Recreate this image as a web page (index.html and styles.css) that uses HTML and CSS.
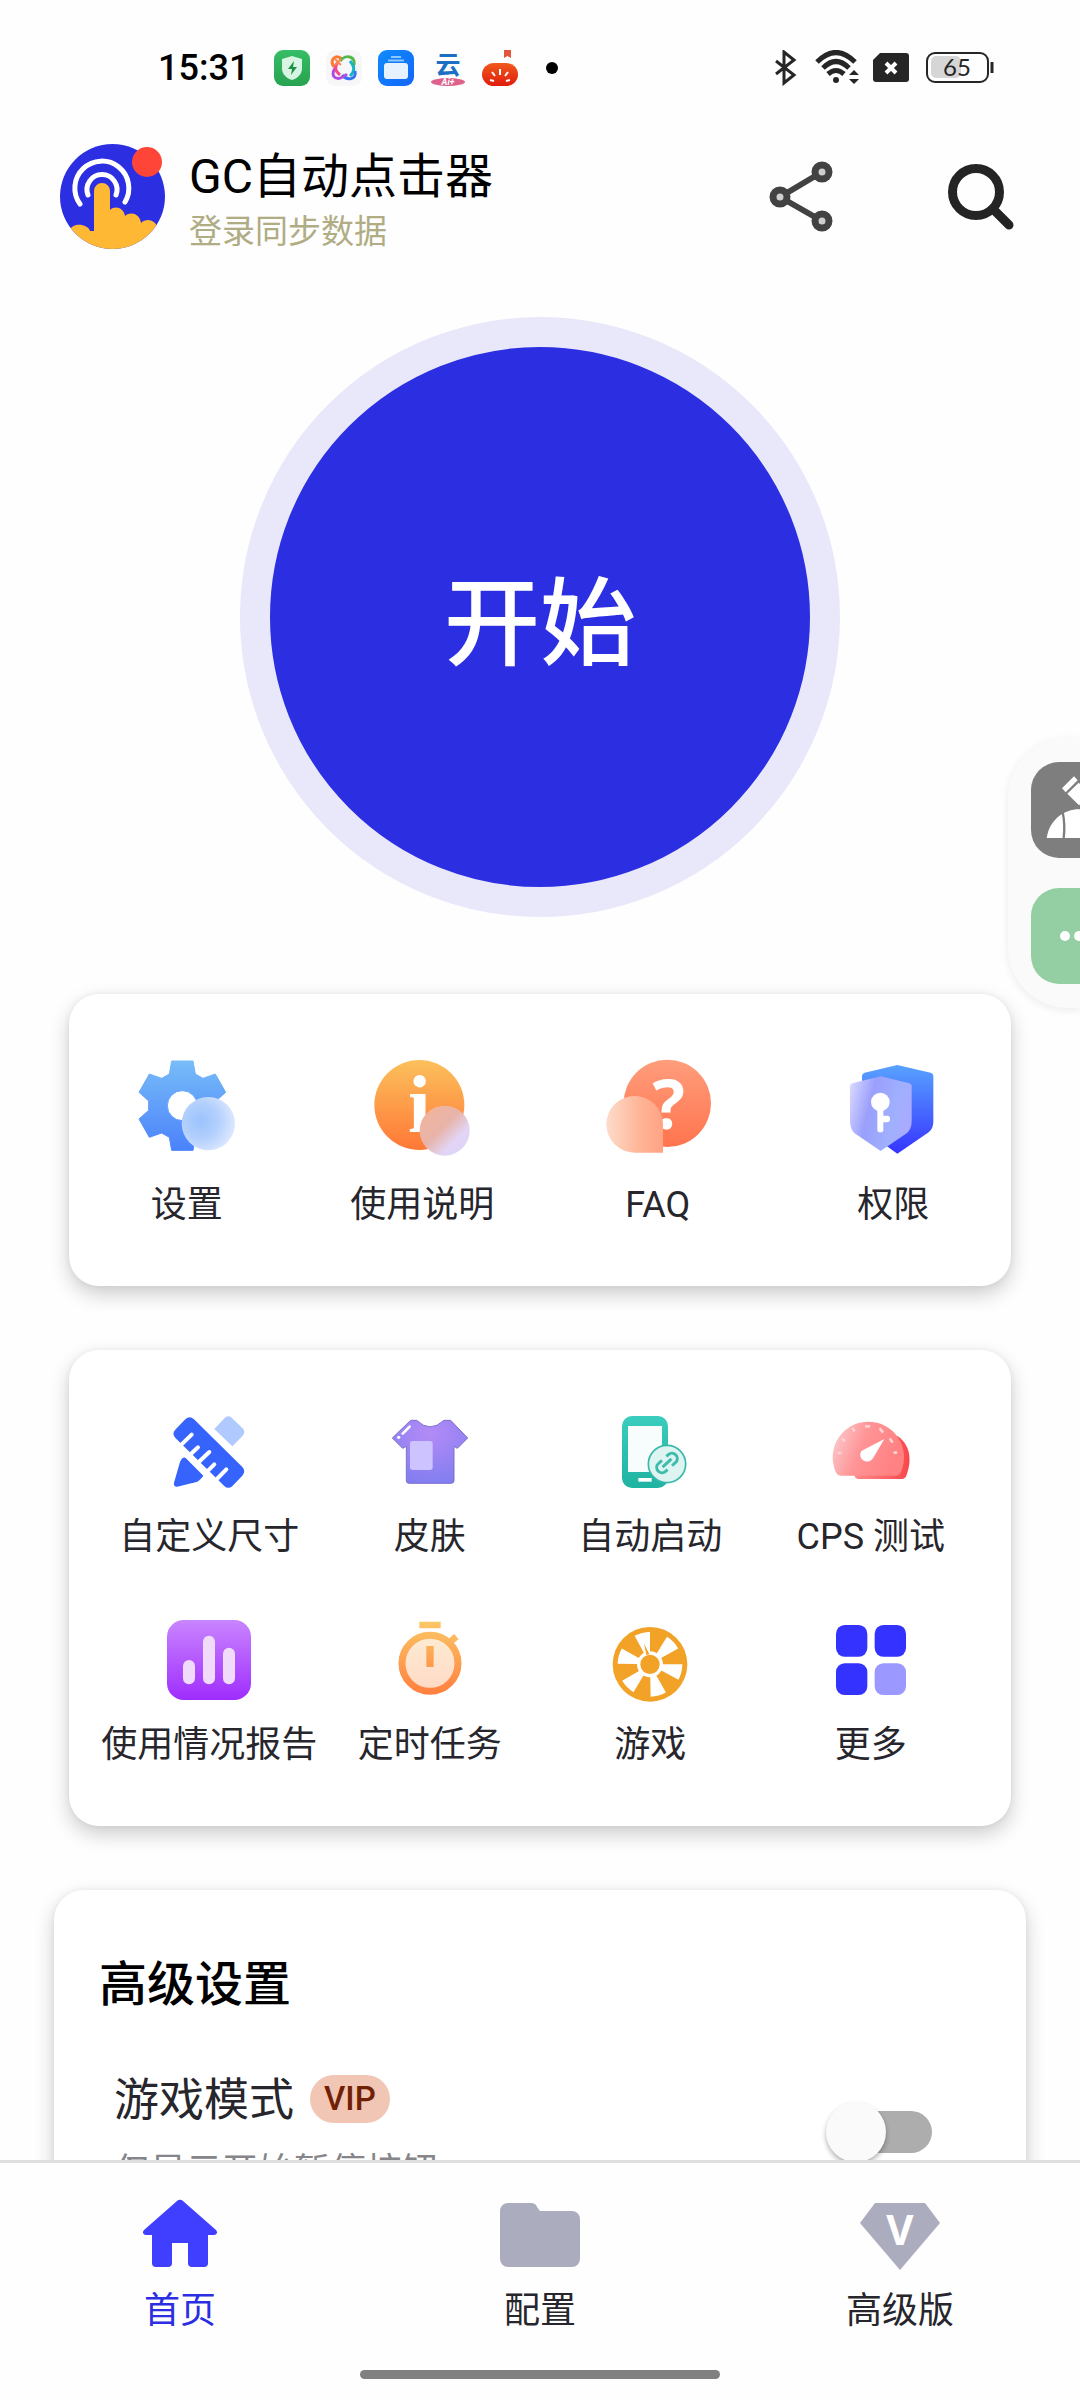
FILE: index.html
```html
<!DOCTYPE html>
<html lang="zh-CN">
<head>
<meta charset="utf-8">
<meta name="viewport" content="width=device-width, initial-scale=1">
<title>GC自动点击器</title>
<link rel="stylesheet" href="styles.css">
</head>
<body>
<div class="status">
  <time class="clock">15:31</time>
  <div class="notices">
    <svg width="36" height="36" viewBox="0 0 36 36"><defs><linearGradient id="ng" x2="0" y2="1"><stop stop-color="#36bd66"/><stop offset="1" stop-color="#27a350"/></linearGradient></defs><rect width="36" height="36" rx="9" fill="url(#ng)"/><path d="M18 6l10 3v9c0 6-4 10-10 12C12 28 8 24 8 18V9z" fill="#d8f5e3"/><path d="M20 11l-6 8h4l-1 6 6-8h-4z" fill="#1f9048"/></svg>
    <svg width="36" height="36" viewBox="0 0 36 36"><rect width="36" height="36" rx="9" fill="#f7f7f9"/><g fill="none" stroke-width="3"><path d="M8 17C3 9 10 4 16 9" stroke="#ff7a30"/><path d="M14 11C20 3 32 7 27 17" stroke="#55b84c"/><path d="M24 11c5 6 5 10 0 15" stroke="#18b5c4"/><path d="M29 21c2 9-8 10-13 4" stroke="#3576f0"/><path d="M21 24C12 32 3 28 9 18" stroke="#b44be0"/><path d="M12 12c-4 5-3 9 2 13" stroke="#f04d8a"/></g><path d="M9 9l6 6m0-6l-6 6" stroke="#ff8850" stroke-width="2"/></svg>
    <svg width="36" height="36" viewBox="0 0 36 36"><defs><linearGradient id="nb" x2="1" y2="1"><stop stop-color="#0f8cfb"/><stop offset="1" stop-color="#1365fb"/></linearGradient></defs><rect width="36" height="36" rx="9" fill="url(#nb)"/><path d="M13 7h10M10 10.500h16" stroke="#8cc8ff" stroke-width="2"/><rect x="6" y="13" width="24" height="16" rx="3" fill="#e6f3ff"/></svg>
    <svg width="36" height="36" viewBox="0 0 36 36"><text x="18" y="24" text-anchor="middle" font-size="25" font-weight="700" fill="#1c70c4">云</text><ellipse cx="18" cy="32" rx="17" ry="4" fill="#dd628c"/><text x="18" y="35" text-anchor="middle" font-size="9" font-weight="700" font-style="italic" fill="#fff">Ai+</text></svg>
    <svg width="36" height="36" viewBox="0 0 36 36"><defs><linearGradient id="no" x2="0" y2="1"><stop stop-color="#f05a1c"/><stop offset="1" stop-color="#e01c0c"/></linearGradient></defs><path d="M22 0h7v8l-3.500-2L22 8z" fill="#e2563e"/><rect y="13" width="36" height="23" rx="12" fill="url(#no)"/><path d="M18 19v6M10 22l3 4M26 22l-3 4M8 30l4 1M28 30l-4 1" stroke="#fff" stroke-width="2"/></svg>
  </div>
  <span class="more-notices"></span>
  <svg class="signals" width="220" height="36" viewBox="774 51 220 36">
    <g fill="none" stroke="#262626" stroke-width="3"><path d="M776 62l18 14-10 8V53l10 8-18 14"/><path d="M817 63Q836 44 855 63" stroke-width="5"/><path d="M823 69Q836 56 849 69" stroke-width="5"/><path d="M828 75Q836 68 844 75" stroke-width="5"/></g>
    <circle cx="836" cy="81" r="3" fill="#262626"/><path d="M849 76l5-5 5 5zM849 80l5 5 5-5z" fill="#262626"/>
    <path d="M880 54h26a3 3 0 0 1 3 3v23a3 3 0 0 1-3 3h-30a3 3 0 0 1-3-3V61z" fill="#262626"/><path d="M886 64l10 10m0-10l-10 10" stroke="#fff" stroke-width="4"/>
    <rect x="931" y="57" width="30" height="22" rx="5" fill="#d6d6d6"/><rect x="927" y="54" width="61" height="29" rx="8" fill="none" stroke="#262626" stroke-width="2"/><path d="M992 63v11" stroke="#262626" stroke-width="3"/>
    <text class="charge" x="957" y="77" text-anchor="middle">65</text>
  </svg>
</div>

<header class="header">
  <button class="avatar" aria-label="账号">
    <svg width="105" height="105" viewBox="0 0 105 105"><defs><clipPath id="av"><circle cx="52.500" cy="52.500" r="52.500"/></clipPath></defs>
    <g clip-path="url(#av)"><rect width="105" height="105" fill="#2c2ee2"/>
    <g fill="none" stroke="#fff" stroke-width="5" stroke-linecap="round"><path d="M20 60A27 27 0 1 1 65 58"/><path d="M28 51A15 15 0 1 1 56 51"/></g>
    <path d="M34 47a8 8 0 0 1 16 0v19c5-5 14-2 15 6 6-5 15-2 16 7 6-6 15-2 16 4v24H10V86c3-8 18-6 20 1h4z" fill="#ffb833"/></g></svg>
    <span class="dot"></span>
  </button>
  <div class="account"><h1>GC自动点击器</h1><a href="#login">登录同步数据</a></div>
  <button class="tool" aria-label="分享"><svg width="72" height="72" viewBox="0 0 72 72"><path d="M15 36L57 11M15 36l42 24" stroke="#424242" stroke-width="6"/><g fill="#cfcfcf" stroke="#424242" stroke-width="7"><circle cx="15" cy="36" r="7"/><circle cx="57" cy="11" r="7"/><circle cx="57" cy="60" r="7"/></g></svg></button>
  <button class="tool" aria-label="搜索"><svg width="72" height="72" viewBox="0 0 72 72"><circle cx="31" cy="31" r="23.500" fill="none" stroke="#242424" stroke-width="9"/><path d="M48 48l16 16" stroke="#242424" stroke-width="9" stroke-linecap="round"/></svg></button>
</header>

<main class="main">
  <button class="start">开始</button>

  <section class="card quick">
    <a class="item" href="#settings"><svg width="108" height="108" viewBox="279 249 324 324"><defs><linearGradient id="g1" gradientUnits="userSpaceOnUse" x1="0" y1="-135" x2="0" y2="135"><stop stop-color="#78bcf8"/><stop offset="1" stop-color="#4a82fb"/></linearGradient><radialGradient id="g2" cx=".35" cy=".45" r=".68"><stop stop-color="#9bc3fd"/><stop offset=".5" stop-color="#b3d0fd"/><stop offset="1" stop-color="#dfeaff"/></radialGradient></defs><path transform="translate(427 407)" fill="url(#g1)" stroke="url(#g1)" stroke-width="3" stroke-linejoin="round" fill-rule="evenodd" d="M-32-134H32L39-95 62-82 99-95 130-40 101-14V14L130 40 99 95 62 82 39 95 32 134H-32L-39 95-62 82-99 95-130 40-101 14V-14L-130-40-99-95-62-82-39-95ZM45 0A45 45 0 1 0-45 0 45 45 0 1 0 45 0Z"/><circle cx="505" cy="461" r="80" fill="url(#g2)"/></svg><span>设置</span></a>
    <a class="item" href="#help"><svg width="108" height="108" viewBox="981 249 324 324"><defs><linearGradient id="i1" x2="0" y2="1"><stop stop-color="#fcc05c"/><stop offset="1" stop-color="#ff7836"/></linearGradient><linearGradient id="i2" x2="1" y2="1"><stop offset=".1" stop-color="#f0b49c"/><stop offset=".45" stop-color="#e8b3a8"/><stop offset=".7" stop-color="#e2d4f4"/><stop offset="1" stop-color="#dcd6fc"/></linearGradient></defs><circle cx="1135" cy="405" r="135" fill="url(#i1)"/><text class="glyph-i" x="1135" y="486" text-anchor="middle">i</text><circle cx="1211" cy="482" r="75" fill="url(#i2)"/></svg><span>使用说明</span></a>
    <a class="item" href="#faq"><svg width="108" height="108" viewBox="192 249 324 324"><defs><linearGradient id="q1" x2="0" y2="1"><stop stop-color="#ff9d7c"/><stop offset="1" stop-color="#ff744e"/></linearGradient><linearGradient id="q2"><stop stop-color="#fcdcca"/><stop offset=".6" stop-color="#ffb496"/><stop offset="1" stop-color="#ffa384"/></linearGradient></defs><circle cx="382" cy="400" r="131" fill="url(#q1)"/><text class="glyph-q" x="386" y="478" text-anchor="middle">?</text><path d="M369 548H284A85 85 0 1 1 369 463Z" fill="url(#q2)"/></svg><span>FAQ</span></a>
    <a class="item" href="#permission"><svg width="108" height="108" viewBox="897 249 324 324"><defs><linearGradient id="s1" x2="0" y2="1"><stop stop-color="#58a2ff"/><stop offset="1" stop-color="#3634ff"/></linearGradient><linearGradient id="s2" y2=".3"><stop stop-color="#ddddff"/><stop offset=".4" stop-color="#9a9ffc"/><stop offset=".8" stop-color="#9fb0fd"/><stop offset="1" stop-color="#a8abff"/></linearGradient></defs><path d="M1072 285L1172 308Q1180 310 1180 318V455Q1180 475 1166 487L1072 551 966 475V318Q966 310 974 308Z" fill="url(#s1)"/><path d="M1022 319L1108 340Q1115 342 1115 349V452Q1115 478 1100 490L1022 543 944 490Q930 478 930 452V349Q930 342 937 340Z" fill="url(#s2)"/><circle cx="1021" cy="396" r="28" fill="#fff"/><rect x="1012" y="405" width="18" height="82" rx="8" fill="#fff"/><rect x="1020" y="437" width="30" height="20" rx="9" fill="#fff"/></svg><span>权限</span></a>
  </section>

  <section class="card tools">
    <a class="item" href="#size"><svg width="84" height="84" viewBox="381 240 252 252"><path d="M436 268Q449 255 462 268L607 411Q619 424 607 437L578 467Q565 480 552 467L407 325Q394 312 407 298Z" fill="#3563fb"/><path d="M418 350L455 314M450 374L474 352M470 402L508 366M499 427L523 403M522 456L559 418" stroke="#fff" stroke-width="12" stroke-linecap="round"/><path d="M420 396Q428 379 437 384L490 437Q480 452 466 457L412 470Q400 471 402 458Z" fill="#3563fb"/><path d="M523 297L552 266Q565 252 578 266L607 294Q619 306 607 319L577 349Z" fill="#b0c9ff"/></svg><span>自定义尺寸</span></a>
    <a class="item" href="#skin"><svg width="84" height="84" viewBox="1042 240 252 252"><defs><radialGradient id="t1" cx=".5" cy=".2" r=".9"><stop stop-color="#b48bf6"/><stop offset="1" stop-color="#7c7cf0"/></radialGradient></defs><path d="M1110 271H1128Q1168 310 1210 271H1230L1281 324 1250 355 1240 349V452Q1240 460 1230 460H1106Q1097 460 1097 452V349L1086 355 1055 324Z" fill="url(#t1)" stroke="#7d70cc" stroke-width="3" stroke-linejoin="round"/><rect x="1108" y="333" width="68" height="87" rx="8" fill="#cdc3ff"/><path d="M1086 311L1107 290" stroke="#fff" stroke-width="8" stroke-linecap="round"/><circle cx="1074" cy="322" r="5" fill="#fff"/></svg><span>皮肤</span></a>
    <a class="item" href="#autostart"><svg width="84" height="84" viewBox="204 240 252 252"><defs><linearGradient id="p1" x2="0" y2="1"><stop stop-color="#3accbc"/><stop offset="1" stop-color="#1fb3a2"/></linearGradient></defs><rect x="246" y="258" width="138" height="216" rx="30" fill="url(#p1)"/><rect x="264" y="288" width="102" height="138" fill="#f6fdfc"/><rect x="295" y="444" width="40" height="11" fill="#fff"/><circle cx="381" cy="402" r="56" fill="#ddf4f1" stroke="#37b8aa" stroke-width="5"/><g transform="rotate(-42 381 399)" fill="none" stroke="#3dbcae" stroke-width="9"><path d="M369 415H361A16 16 0 0 1 361 383H375M387 415H401A16 16 0 0 0 401 383H393M363 399H399"/></g></svg><span>自动启动</span></a>
    <a class="item" href="#cps"><svg width="84" height="84" viewBox="864 240 252 252"><defs><linearGradient id="c1"><stop stop-color="#ff8a8a"/><stop offset="1" stop-color="#f9474c"/></linearGradient><linearGradient id="c2" y2=".3"><stop stop-color="#fbd3d6"/><stop offset=".5" stop-color="#ff9496"/><stop offset="1" stop-color="#ff8182"/></linearGradient></defs><path d="M940 437Q944 447 955 447H1080Q1092 447 1096 437C1110 400 1114 350 1070 318Z" fill="url(#c1)"/><path d="M900 437Q889 437 884 425A107 107 0 1 1 1080 425Q1075 437 1064 437Z" fill="url(#c2)"/><path d="M893 369h5M905 328l4 4M936 297l3 4M976 289h8M1018 297l6 8M1048 328l5 7M1061 368h4" stroke="#ffd2d2" stroke-width="8" stroke-linecap="round"/><path d="M961 363L1030 327 996 385A20 20 0 1 1 961 363Z" fill="#fff"/></svg><span>CPS 测试</span></a>
    <a class="item" href="#report"><svg width="84" height="84" viewBox="381 864 252 252"><defs><linearGradient id="r1" x2="0" y2="1"><stop stop-color="#c985ff"/><stop offset="1" stop-color="#9f2dfd"/></linearGradient></defs><rect x="381" y="870" width="252" height="240" rx="50" fill="url(#r1)"/><g fill="#f0dcfa"><rect x="429" y="990" width="36" height="73" rx="18"/><rect x="489" y="917" width="36" height="146" rx="18"/><rect x="549" y="953" width="36" height="110" rx="18"/></g></svg><span>使用情况报告</span></a>
    <a class="item" href="#timer"><svg width="84" height="84" viewBox="1042 864 252 252"><defs><linearGradient id="w1" gradientUnits="userSpaceOnUse" x1="0" y1="875" x2="0" y2="1095"><stop stop-color="#fcc766"/><stop offset="1" stop-color="#ff7e3e"/></linearGradient><linearGradient id="w2" x2="0" y2="1"><stop stop-color="#fdebd2"/><stop offset="1" stop-color="#ffd9c6"/></linearGradient></defs><path d="M1228 936L1247 920" stroke="#fcb85c" stroke-width="20"/><circle cx="1168" cy="1000" r="84" fill="url(#w2)" stroke="url(#w1)" stroke-width="21"/><path d="M1136 875h64v20h-64zM1157 948h22v63h-22z" fill="url(#w1)"/></svg><span>定时任务</span></a>
    <a class="item" href="#game"><svg width="84" height="84" viewBox="200 864 252 252"><circle cx="326" cy="1003" r="112" fill="#f2a226"/><circle cx="326" cy="1003" r="67" fill="none" stroke="#fff" stroke-width="60" stroke-dasharray="33 37.160"/><circle cx="326" cy="1003" r="34" fill="#f2a226" stroke="#fff" stroke-width="10"/><path d="M308 940l16 33-9 2z" fill="#f2a226"/></svg><span>游戏</span></a>
    <a class="item" href="#more"><svg width="84" height="84" viewBox="864 864 252 252"><g fill="#3332ff"><rect x="885" y="885" width="94" height="95" rx="26"/><rect x="1001" y="885" width="94" height="95" rx="26"/><rect x="885" y="1000" width="94" height="95" rx="26"/></g><rect x="1001" y="1000" width="94" height="95" rx="26" fill="#9b99ff"/></svg><span>更多</span></a>
  </section>

  <section class="card advanced">
    <h2>高级设置</h2>
    <label class="setting">
      <span class="setting-text">
        <span class="setting-name">游戏模式 <span class="vip">VIP</span></span>
        <span class="setting-hint">仅显示开始暂停按钮</span>
      </span>
      <input class="switch" type="checkbox">
    </label>
  </section>
</main>

<nav class="tabs">
  <a class="tab active" href="#home"><svg width="84" height="72" viewBox="0 0 84 72"><path d="M39 3a4 4 0 0 1 6 0l33 29c2 2 1 5-2 5h-6v28a4 4 0 0 1-4 4H54a4 4 0 0 1-4-4V45H34v20a4 4 0 0 1-4 4H18a4 4 0 0 1-4-4V37H8c-3 0-4-3-2-5z" fill="#403fff"/></svg>首页</a>
  <a class="tab" href="#config"><svg width="84" height="72" viewBox="0 0 84 72"><path d="M10 5h23c3 0 5 1 6 4l3 4h32a8 8 0 0 1 8 8v40a8 8 0 0 1-8 8H10a8 8 0 0 1-8-8V13a8 8 0 0 1 8-8z" fill="#acacbf"/></svg>配置</a>
  <a class="tab" href="#premium"><svg width="84" height="72" viewBox="0 0 84 72"><path d="M17 5h50l15 20L42 72 2 25z" fill="#acacbf"/><text class="glyph-v" x="42" y="47" text-anchor="middle">V</text></svg>高级版</a>
</nav>
<div class="gesture"></div>

<aside class="dock">
  <button class="dock-button edit" aria-label="编辑"><svg width="96" height="96" viewBox="213 126 288 288"><path d="M260 354C268 300 312 268 357 268S446 300 454 354Z" fill="#fff"/><path d="M308 276Q316 315 311 354" fill="none" stroke="#7e7e7e" stroke-width="7"/><path d="M306 205L342 169 353 181 317 217ZM322 221L356 188 392 224 357 256Z" fill="#fff"/></svg></button>
  <button class="dock-button chat" aria-label="更多"><svg width="96" height="96" viewBox="0 0 96 96"><g fill="#fff"><circle cx="34" cy="48" r="5"/><circle cx="48" cy="48" r="5"/><circle cx="62" cy="48" r="5"/></g></svg></button>
</aside>
</body>
</html>
```
FILE: styles.css
```css
* { box-sizing: border-box; }

body {
  margin: 0;
  height: 100vh;
  display: flex;
  flex-direction: column;
  overflow: hidden;
  background: #fefefe;
  color: #26262c;
  font-family: Roboto, "Noto Sans CJK SC", sans-serif;
}

svg { display: block; flex: none; }

button {
  padding: 0;
  border: 0;
  background: none;
  font: inherit;
  color: inherit;
}

a { color: inherit; text-decoration: none; }

/* Status bar */
.status {
  display: flex;
  align-items: center;
  height: 136px;
  flex: none;
  padding: 0 86px 0 158px;
}
.clock { font-size: 36px; font-weight: 500; color: #000; }
.notices { display: flex; gap: 16px; margin-left: 25px; }
.more-notices {
  width: 12px;
  height: 12px;
  margin-left: 28px;
  border-radius: 50%;
  background: #000;
}
.signals { margin-left: auto; }
.charge { font: 24px Lato, sans-serif; fill: #262626; }

/* Header */
.header {
  display: flex;
  align-items: flex-start;
  flex: none;
  padding: 8px 63px 0 60px;
}
.avatar { position: relative; }
.dot {
  position: absolute;
  top: 3px;
  right: 3px;
  width: 30px;
  height: 30px;
  border-radius: 50%;
  background: #ff4438;
}
.account { margin-left: 24px; margin-right: auto; }
.account h1 {
  margin: 0;
  font-size: 48px;
  line-height: 66px;
  font-weight: 400;
  color: #000;
}
.account a {
  display: block;
  font-size: 33px;
  line-height: 44px;
  color: #b0ac84;
}
.tool { margin-left: 108px; padding: 17px 0; }

/* Scrolling content */
.main {
  flex: 1;
  min-height: 0;
  display: flex;
  flex-direction: column;
  gap: 64px;
  overflow-y: auto;
  scrollbar-width: none;
  padding: 63px 69px 0;
}
.start {
  flex: none;
  align-self: center;
  width: 600px;
  height: 600px;
  margin-bottom: 13px;
  padding-bottom: 4px;
  border: 30px solid #e9e8fa;
  border-radius: 50%;
  background: #2c2ee2;
  color: #fff;
  font-size: 96px;
  font-weight: 500;
}
.card {
  flex: none;
  border-radius: 30px;
  background: #fff;
  box-shadow: 0 8px 20px rgba(0, 0, 0, .2), 0 0 6px rgba(0, 0, 0, .05);
}
.quick, .tools { display: grid; grid-template-columns: repeat(4, 1fr); }
.quick { padding: 59px 0; }
.tools { padding: 60px 30px 59px; row-gap: 59px; }
.item {
  display: flex;
  flex-direction: column;
  align-items: center;
  gap: 22px;
  font-size: 36px;
  line-height: 44px;
  white-space: nowrap;
}
.tools .item { gap: 21px; }

.glyph-i { font: bold 246px "Liberation Serif", serif; fill: #fff; }
.glyph-q { font: bold 204px "Open Sans", sans-serif; fill: #fff; }
.glyph-v { font: bold 42px "Open Sans", sans-serif; fill: #fff; }

/* Advanced settings */
.advanced { margin: 0 -15px; padding: 60px 45px; }
.advanced h2 {
  margin: 0;
  font-size: 48px;
  line-height: 70px;
  font-weight: 500;
  color: #000;
}
.setting {
  display: flex;
  align-items: flex-start;
  justify-content: space-between;
  padding: 51px 49px 0 15px;
}
.setting-text { display: flex; flex-direction: column; gap: 14px; }
.setting-name {
  display: flex;
  align-items: center;
  gap: 16px;
  font-size: 45px;
  line-height: 60px;
}
.vip {
  margin-bottom: 4px;
  padding: 0 14px;
  border-radius: 24px;
  background: #f1c6b5;
  color: #702004;
  font-size: 33px;
  line-height: 48px;
  font-weight: 500;
}
.setting-hint { font-size: 36px; line-height: 54px; color: #85858a; }
.switch {
  appearance: none;
  display: flex;
  align-items: center;
  width: 96px;
  height: 42px;
  margin: 40px 0 0;
  border-radius: 21px;
  background: #adadad;
}
.switch::before {
  content: "";
  width: 60px;
  height: 60px;
  flex: none;
  margin-left: -10px;
  border-radius: 50%;
  background: #fafafa;
  box-shadow: 0 3px 5px rgba(0, 0, 0, .3);
}
.switch:checked { background: #9b99ff; }
.switch:checked::before { margin-left: 46px; background: #403fff; }

/* Bottom tabs */
.tabs {
  position: relative;
  display: grid;
  grid-template-columns: repeat(3, 1fr);
  flex: none;
  padding: 35px 0 37px;
  border-top: 3px solid #e0e0e0;
  background: #fefefe;
}
.tab {
  display: flex;
  flex-direction: column;
  align-items: center;
  gap: 19px;
  font-size: 36px;
  line-height: 44px;
}
.tab.active { color: #2c2ee2; }
.gesture {
  flex: none;
  align-self: center;
  width: 33.333%;
  height: 9px;
  margin-bottom: 21px;
  border-radius: 5px;
  background: #808080;
}

/* Floating dock at the screen edge */
.dock {
  position: fixed;
  top: 738px;
  right: 0;
  display: flex;
  flex-direction: column;
  gap: 30px;
  width: 72px;
  padding: 24px 0 24px 23px;
  border-radius: 60px 0 0 60px;
  background: #fafafb;
  box-shadow: 0 2px 8px rgba(0, 0, 0, .08);
  overflow: hidden;
}
.dock-button {
  width: 96px;
  height: 96px;
  border-radius: 28px;
  overflow: hidden;
}
.edit { background: #7e7e7e; }
.chat { background: #93cfa2; }
```
